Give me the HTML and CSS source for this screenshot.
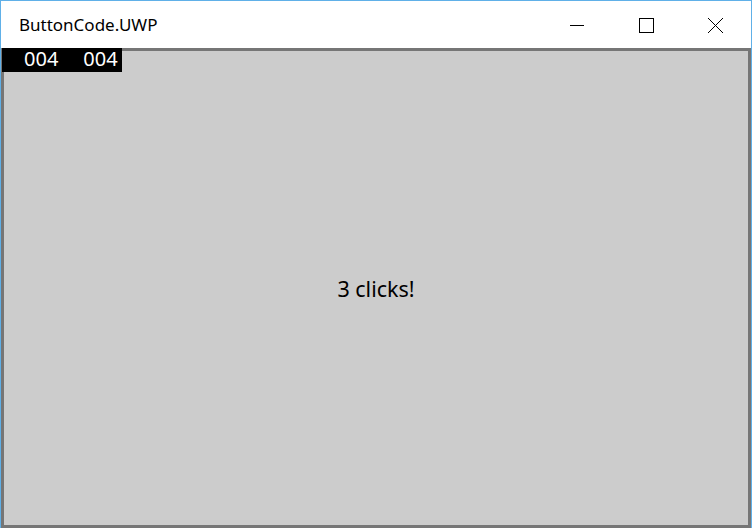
FILE: index.html
```html
<!DOCTYPE html>
<html>
<head>
<meta charset="utf-8">
<link rel="stylesheet" href="styles.css">
</head>
<body>
<div class="window">
  <div class="titlebar">
    <div class="title">ButtonCode.UWP</div>
    <div class="controls">
      <div class="ctl">
        <svg width="46" height="32" viewBox="0 0 46 32"><path d="M18 16.5h14" stroke="#000" stroke-width="1"/></svg>
      </div>
      <div class="ctl">
        <svg width="46" height="32" viewBox="0 0 46 32"><rect x="18.5" y="9.5" width="14" height="14" fill="none" stroke="#000" stroke-width="1"/></svg>
      </div>
      <div class="ctl">
        <svg width="46" height="32" viewBox="0 0 46 32"><path d="M18 9l15 15M33 9l-15 15" stroke="#000" stroke-width="1"/></svg>
      </div>
    </div>
  </div>
  <div class="content">
    <div class="fps"><span>004</span><span>004</span></div>
    <div class="message">3 clicks!</div>
  </div>
</div>
</body>
</html>
```
FILE: styles.css
```css
html, body {
  margin: 0;
  padding: 0;
}
body {
  width: 752px;
  height: 528px;
  overflow: hidden;
  font-family: "Noto Sans", "Open Sans", sans-serif;
}
.window {
  box-sizing: border-box;
  width: 752px;
  height: 528px;
  border: 1px solid #60b0e8;
  border-bottom: none;
  display: flex;
  flex-direction: column;
  background: #fff;
}
.titlebar {
  height: 47px;
  display: flex;
  align-items: flex-start;
  justify-content: space-between;
  flex: none;
}
.title {
  padding-left: 18px;
  padding-top: 12px;
  font-size: 17px;
  color: #000;
}
.controls {
  display: flex;
  padding-top: 8px;
  margin-right: 4px;
}
.ctl {
  width: 69px;
  height: 32px;
  display: flex;
  justify-content: center;
}
.ctl svg {
  display: block;
}
.content {
  flex: 1;
  position: relative;
  background: #cccccc;
  border: 3px solid #767676;
  display: flex;
  align-items: center;
  justify-content: center;
}
.fps {
  position: absolute;
  left: -2px;
  top: -3px;
  width: 120px;
  height: 24px;
  background: #000;
  color: #fff;
  font-size: 20px;
  line-height: 22px;
  display: flex;
  gap: 25px;
  padding-left: 22px;
  box-sizing: border-box;
}
.message {
  font-size: 21.5px;
  color: #000;
  margin-top: 0px;
}
```
